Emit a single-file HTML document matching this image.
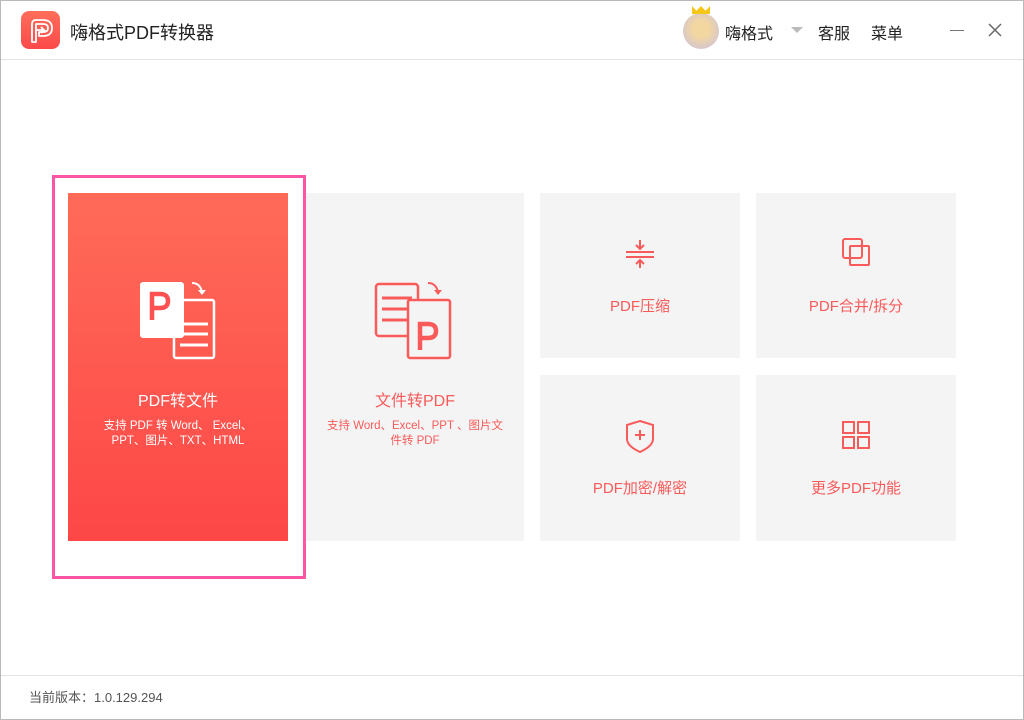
<!DOCTYPE html>
<html><head><meta charset="utf-8"><style>
*{margin:0;padding:0;box-sizing:border-box}
body{width:1024px;height:720px;background:#fff;font-family:"Liberation Sans","Noto Sans CJK SC",sans-serif;position:relative;overflow:hidden}
.frame{position:absolute;left:0;top:0;width:1024px;height:720px;border:1px solid #b9b9b9}
.abs{position:absolute}
.hline{position:absolute;left:1px;right:1px;height:1px;background:#e3e3e3}
.card{position:absolute;background:#f4f4f4;text-align:center;color:#f95a5a}
.small{font-size:15px}
</style></head><body>
<div class="frame"></div>
<div class="abs" style="left:21px;top:11px;width:39px;height:38px;border-radius:8px;background:linear-gradient(#ff6e5a,#fb4a4a)">
<svg width="39" height="38" viewBox="0 0 39 38"><path d="M11 31 V13 Q11 9 15 9 H22 Q31 9 31 17 Q31 25 22 25 H18 V21 H22 Q27 21 27 17 Q27 13 22 13 H15 V31 Z" fill="none" stroke="#fff" stroke-width="1.8" stroke-linejoin="round"/><path d="M15 19 H23 L20 16 M23 19 L20 22" fill="none" stroke="#fff" stroke-width="1.8"/></svg></div>
<div class="abs" style="left:70px;top:19px;font-size:18px;color:#222">嗨格式PDF转换器</div>
<div class="abs" style="left:683px;top:13px;width:36px;height:36px;border-radius:50%;background:radial-gradient(circle at 50% 45%,#f3d7a0 30%,#d9c8c8 70%)"></div>
<div class="abs" style="left:692px;top:6px;width:18px;height:8px;background:#f5c518;clip-path:polygon(0 100%,0 0,25% 60%,50% 0,75% 60%,100% 0,100% 100%)"></div>
<div class="abs" style="left:725px;top:20px;font-size:16px;color:#222">嗨格式</div>
<div class="abs" style="left:791px;top:27px;width:0;height:0;border-left:6px solid transparent;border-right:6px solid transparent;border-top:6px solid #bbb"></div>
<div class="abs" style="left:818px;top:20px;font-size:16px;color:#222">客服</div>
<div class="abs" style="left:871px;top:20px;font-size:16px;color:#222">菜单</div>
<div class="abs" style="left:950px;top:30px;width:14px;height:1px;background:#777"></div>
<svg class="abs" style="left:988px;top:23px" width="14" height="14"><path d="M1 1L13 13M13 1L1 13" stroke="#666" stroke-width="1.5"/></svg>
<div class="hline" style="top:59px"></div>

<div class="abs" style="left:52px;top:175px;width:254px;height:404px;border:3px solid #fd55a6"></div>
<div class="card" style="left:68px;top:193px;width:220px;height:348px;background:linear-gradient(#ff6b58,#fd4747);color:#fff">
<svg class="abs" style="left:70px;top:87px" width="80" height="80" viewBox="0 0 80 80">
<rect x="36" y="20" width="40" height="58" rx="2" fill="none" stroke="#fff" stroke-width="2.5"/>
<path d="M42 44H70M42 54H70M42 65H70" stroke="#fff" stroke-width="3"/>
<rect x="2" y="2" width="44" height="56" rx="3" fill="#fff"/>
<path d="M14 40V14H22Q30 14 30 21Q30 28 22 28H14" fill="none" stroke="#fd5050" stroke-width="4.5"/>
<path d="M54 3Q62 3 64 12" fill="none" stroke="#fff" stroke-width="2"/><path d="M60 10L64 15L68 10Z" fill="#fff"/>
</svg>
<div class="abs" style="left:0;right:0;top:194px;font-size:16px">PDF转文件</div>
<div class="abs" style="left:0;right:0;top:226px;font-size:11.5px;line-height:15px">支持 PDF 转 Word、 Excel、<br>PPT、图片、TXT、HTML</div>
</div>
<div class="card" style="left:306px;top:193px;width:218px;height:348px">
<svg class="abs" style="left:68px;top:87px" width="80" height="80" viewBox="0 0 80 80">
<rect x="2" y="4" width="42" height="52" rx="3" fill="none" stroke="#f95a5a" stroke-width="2.5"/>
<path d="M8 18H38M8 29H38M8 40H38" stroke="#f95a5a" stroke-width="3"/>
<rect x="34" y="20" width="42" height="58" rx="2" fill="#f4f4f4" stroke="#f95a5a" stroke-width="2.5"/>
<path d="M46 70V44H54Q62 44 62 51Q62 58 54 58H46" fill="none" stroke="#f95a5a" stroke-width="4.5"/>
<path d="M54 3Q62 3 64 12" fill="none" stroke="#f95a5a" stroke-width="2"/><path d="M60 10L64 15L68 10Z" fill="#f95a5a"/>
</svg>
<div class="abs" style="left:0;right:0;top:194px;font-size:16px">文件转PDF</div>
<div class="abs" style="left:10px;right:10px;top:226px;font-size:11.5px;line-height:15px">支持 Word、Excel、PPT 、图片文<br>件转 PDF</div>
</div>
<div class="card" style="left:540px;top:193px;width:200px;height:165px">
<svg class="abs" style="left:84px;top:45px" width="32" height="32" viewBox="0 0 32 32"><path d="M2 14H30M2 19H30M16 2V11M12 7L16 11L20 7M16 30V22M12 26L16 22L20 26" fill="none" stroke="#f95a5a" stroke-width="2"/></svg>
<div class="abs small" style="left:0;right:0;top:102px">PDF压缩</div>
</div>
<div class="card" style="left:756px;top:193px;width:200px;height:165px">
<svg class="abs" style="left:84px;top:44px" width="32" height="32" viewBox="0 0 32 32"><rect x="3" y="2" width="19" height="19" rx="2" fill="none" stroke="#f95a5a" stroke-width="2"/><rect x="10" y="9" width="19" height="19" rx="1" fill="none" stroke="#f95a5a" stroke-width="2"/></svg>
<div class="abs small" style="left:0;right:0;top:102px">PDF合并/拆分</div>
</div>
<div class="card" style="left:540px;top:375px;width:200px;height:166px">
<svg class="abs" style="left:84px;top:44px" width="32" height="34" viewBox="0 0 32 34"><path d="M16 2L29 6V20Q29 27 16 33Q3 27 3 20V6Z" fill="none" stroke="#f95a5a" stroke-width="2"/><path d="M16 11V21M11 16H21" stroke="#f95a5a" stroke-width="2"/></svg>
<div class="abs small" style="left:0;right:0;top:102px">PDF加密/解密</div>
</div>
<div class="card" style="left:756px;top:375px;width:200px;height:166px">
<svg class="abs" style="left:84px;top:44px" width="32" height="32" viewBox="0 0 32 32"><g fill="none" stroke="#f95a5a" stroke-width="2"><rect x="3" y="3" width="11" height="11"/><rect x="18" y="3" width="11" height="11"/><rect x="3" y="18" width="11" height="11"/><rect x="18" y="18" width="11" height="11"/></g></svg>
<div class="abs small" style="left:0;right:0;top:102px">更多PDF功能</div>
</div>

<div class="hline" style="top:675px"></div>
<div class="abs" style="left:29px;top:687px;font-size:13px;color:#555">当前版本：1.0.129.294</div>
</body></html>
